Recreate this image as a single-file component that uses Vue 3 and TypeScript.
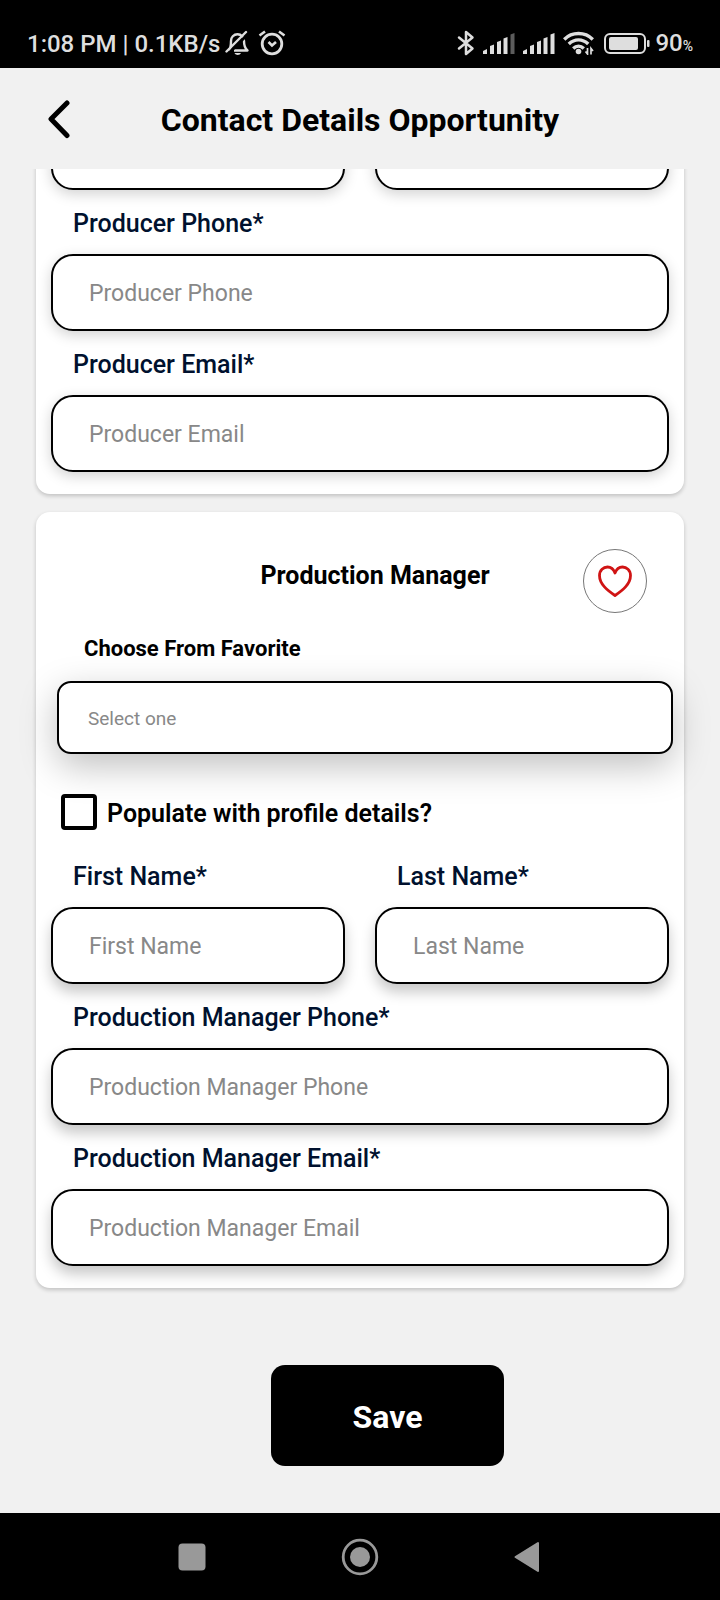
<script setup lang="ts">
import { reactive, ref } from 'vue'

interface Field {
  id: string
  label: string
  placeholder: string
  type: string
  half?: boolean
}

const producerFields: Field[] = [
  { id: 'producer-phone', label: 'Producer Phone*', placeholder: 'Producer Phone', type: 'tel' },
  { id: 'producer-email', label: 'Producer Email*', placeholder: 'Producer Email', type: 'email' },
]

const managerFields: Field[] = [
  { id: 'manager-first', label: 'First Name*', placeholder: 'First Name', type: 'text', half: true },
  { id: 'manager-last', label: 'Last Name*', placeholder: 'Last Name', type: 'text', half: true },
  { id: 'manager-phone', label: 'Production Manager Phone*', placeholder: 'Production Manager Phone', type: 'tel' },
  { id: 'manager-email', label: 'Production Manager Email*', placeholder: 'Production Manager Email', type: 'email' },
]

const values = reactive<Record<string, string>>({})
const favorite = ref('')
const populate = ref(false)
const signalBars = [4, 5]
</script>

<template>
  <div class="app">
    <div class="status">
      <div class="status-group">
        <span class="clock">1:08 PM | 0.1KB/s</span>
        <svg class="bell" width="25" height="26" viewBox="0 0 25 26" fill="none" stroke="#dedede" stroke-width="2.400">
          <path d="M3.500 20.500C6 18.500 6 16 6 11a6.500 6.500 0 0 1 6.500-6.800a6.500 6.500 0 0 1 6.500 6.800c0 5 .5 7 3.500 9.500H9" stroke-linejoin="round" />
          <path d="M3.500 23.500 23 4" stroke="#000" stroke-width="3" />
          <path d="M1.500 21.500 21 2" stroke-linecap="round" />
          <path d="M9.500 23h6.500c-1 2.500-5.500 2.500-6.500 0z" fill="#dedede" stroke="none" />
        </svg>
        <svg class="alarm" width="28" height="26" viewBox="0 0 28 26" fill="none" stroke="#dedede" stroke-width="2.800">
          <circle cx="14" cy="14" r="9.800" />
          <path d="M10.500 12 14 15.500l4-3.500M1.500 5.500 7 1.500M26.500 5.500 21 1.500" stroke-width="2.600" />
        </svg>
      </div>
      <div class="status-group">
        <svg width="18" height="26" viewBox="0 0 18 26" fill="none" stroke="#dedede" stroke-width="2.500">
          <path d="M2 7.500 15.500 18.500 9 24V2l6.500 5.500L2 18.500" stroke-linejoin="round" stroke-linecap="round" />
        </svg>
        <svg v-for="level in signalBars" :key="level" class="signal" width="32" height="21" viewBox="0 0 32 21" fill="#dedede">
          <path d="M0 21v-3l4-2v5z" />
          <path d="M7 21v-8l4-1.500V21z" />
          <path d="M14 21V9l4-1.500V21z" />
          <path d="M20.500 21V5.500l4-1.500v17z" />
          <path d="M27.500 21V1.500l4-1.500v21z" :fill="level === 5 ? '#dedede' : '#5c5c5c'" />
        </svg>
        <svg class="wifi" width="31" height="24" viewBox="0 0 31 24" fill="none" stroke="#dedede" stroke-width="3.400">
          <path d="M1.200 8.500C9 .5 22 .5 29.800 8.500M5.800 13C11.500 7.500 19.500 7.500 25.200 13M10.200 17.400c3.200-3 7.400-3 10.600 0" />
          <circle cx="15.500" cy="20.500" r="2.800" fill="#dedede" stroke="none" />
          <path d="M24.500 17v6l-2-2.500M28 23.500v-6l2 2.500" stroke-width="1.700" />
        </svg>
        <svg class="battery" width="46" height="21" viewBox="0 0 46 21" fill="none">
          <rect x="1" y="1" width="40" height="19" rx="5" stroke="#dedede" stroke-width="2" />
          <rect x="5" y="4" width="29" height="13" rx="2" fill="#dedede" />
          <rect x="43" y="7" width="2.500" height="7" rx="1" fill="#dedede" />
        </svg>
        <span class="percent">90<small>%</small></span>
      </div>
    </div>

    <header class="topbar">
      <button class="back" type="button" aria-label="Back">
        <svg width="24" height="40" viewBox="0 0 24 40" fill="none" stroke="#000" stroke-width="5" stroke-linecap="round" stroke-linejoin="round">
          <path d="M20 4 4 20l16 16.500" />
        </svg>
      </button>
      <h1>Contact Details Opportunity</h1>
    </header>

    <!-- Reversed column keeps the list resting on its last items -->
    <main class="scroller">
      <form class="form" @submit.prevent>
        <section class="card producer">
          <div class="fields">
            <input v-model="values['producer-first']" class="box half" type="text" aria-label="First Name" />
            <input v-model="values['producer-last']" class="box half" type="text" aria-label="Last Name" />
            <div v-for="f in producerFields" :key="f.id" class="field">
              <label :for="f.id">{{ f.label }}</label>
              <input :id="f.id" v-model="values[f.id]" class="box" :type="f.type" :placeholder="f.placeholder" />
            </div>
          </div>
        </section>

        <section class="card manager">
          <div class="card-head">
            <h2>Production Manager</h2>
            <button class="heart" type="button" aria-label="Add to favorites">
              <svg width="36" height="34" viewBox="0 0 36 34" fill="none" stroke="#d01414" stroke-width="2.800" stroke-linejoin="round">
                <path d="M18 31.500C10 26 2.500 20 2.500 11.500C2.500 6 6.500 3 10.500 3C14 3 16.500 5 18 9C19.500 5 22 3 25.500 3C29.500 3 33.500 6 33.500 11.500C33.500 20 26 26 18 31.500z" />
              </svg>
            </button>
          </div>
          <label class="choose" for="favorite">Choose From Favorite</label>
          <select id="favorite" v-model="favorite" class="select">
            <option value="">Select one</option>
          </select>
          <label class="populate">
            <input v-model="populate" type="checkbox" />
            <span>Populate with profile details?</span>
          </label>
          <div class="fields">
            <div v-for="f in managerFields" :key="f.id" class="field" :class="{ half: f.half }">
              <label :for="f.id">{{ f.label }}</label>
              <input :id="f.id" v-model="values[f.id]" class="box" :type="f.type" :placeholder="f.placeholder" />
            </div>
          </div>
        </section>

        <div class="actions">
          <button class="save" type="submit">Save</button>
        </div>
      </form>
    </main>

    <nav class="sysnav">
      <button type="button" aria-label="Recent apps">
        <svg width="38" height="38" viewBox="0 0 38 38"><rect x="5.500" y="5.500" width="27" height="27" rx="4" fill="#999" /></svg>
      </button>
      <button type="button" aria-label="Home">
        <svg width="38" height="38" viewBox="0 0 38 38">
          <circle cx="19" cy="19" r="16.800" fill="none" stroke="#999" stroke-width="2.800" />
          <circle cx="19" cy="19" r="10" fill="#999" />
        </svg>
      </button>
      <button type="button" aria-label="Back">
        <svg width="38" height="38" viewBox="0 0 38 38"><path d="M6.500 19 29 5v28z" fill="#999" stroke="#999" stroke-width="2" stroke-linejoin="round" /></svg>
      </button>
    </nav>
  </div>
</template>

<style>
body {
  margin: 0;
  background: #f1f1f1;
}
</style>

<style scoped>
.app {
  display: flex;
  flex-direction: column;
  height: 100vh;
  background: #f1f1f1;
  color: #000;
  font-family: Roboto, 'Liberation Sans', sans-serif;
}
.app *,
.app {
  box-sizing: border-box;
}
button,
input,
select {
  margin: 0;
  font-family: inherit;
}
button {
  padding: 0;
  border: 0;
  background: none;
  cursor: pointer;
}
svg {
  display: block;
}
.status {
  flex: none;
  display: flex;
  justify-content: space-between;
  align-items: center;
  height: 68px;
  padding: 18px 27px 0;
  background: #000;
  color: #dedede;
}
.status-group {
  display: flex;
  align-items: center;
}
.clock,
.percent {
  padding-top: 2px;
  font-size: 24px;
  line-height: 28px;
  font-weight: 500;
}
.bell {
  margin-left: 5px;
}
.alarm {
  margin-left: 8px;
}
.signal {
  margin-left: 8px;
}
.wifi {
  margin-left: 8px;
}
.battery {
  margin-left: 10px;
}
.percent {
  margin-left: 5px;
}
.percent small {
  font-size: 14px;
}
.topbar {
  flex: none;
  display: grid;
  grid-template-columns: 1fr auto 1fr;
  align-items: center;
  height: 101px;
  padding: 0 47px;
}
.back {
  justify-self: start;
}
h1 {
  margin: 0;
  padding-top: 2px;
  font-size: 32px;
  line-height: 40px;
  font-weight: 700;
}
.scroller {
  flex: 1;
  min-height: 0;
  display: flex;
  flex-direction: column-reverse;
  overflow-y: auto;
  scrollbar-width: none;
}
.form {
  flex: none;
  padding: 0 36px 47px;
}
.card {
  padding: 0 15px 22px;
  border-radius: 14px;
  background: #fff;
  box-shadow: 0 2px 4px rgba(0, 0, 0, 0.2);
}
.manager {
  margin-top: 18px;
  padding-top: 37px;
}
.fields {
  display: grid;
  grid-template-columns: 1fr 1fr;
  column-gap: 30px;
}
.field {
  grid-column: span 2;
  display: flex;
  flex-direction: column;
}
.half {
  grid-column: span 1;
}
.field label {
  margin: 19px 22px 15px;
  color: #00112e;
  font-size: 25px;
  line-height: 30px;
  font-weight: 500;
}
.box {
  width: 100%;
  height: 77px;
  padding: 2px 36px 0;
  border: 2px solid #000;
  border-radius: 22px;
  background: #fff;
  box-shadow: 0 4px 14px rgba(0, 0, 0, 0.18);
  font-size: 23px;
}
.manager .box {
  box-shadow: 0 8px 14px rgba(0, 0, 0, 0.22);
}
.box::placeholder {
  color: #888;
  opacity: 1;
}
.card-head {
  display: grid;
  grid-template-columns: 1fr auto 1fr;
  align-items: start;
  padding: 0 22px 0 52px;
}
h2 {
  grid-column: 2;
  margin: 12px 0 0;
  font-size: 25px;
  line-height: 30px;
  font-weight: 700;
}
.heart {
  justify-self: end;
  display: grid;
  place-items: center;
  width: 64px;
  height: 64px;
  border: 1px solid #777;
  border-radius: 50%;
}
.choose {
  display: block;
  margin: 22px 33px 18px;
  font-size: 22px;
  line-height: 28px;
  font-weight: 700;
}
.select {
  display: block;
  width: calc(100% - 2px);
  height: 73px;
  margin-left: 6px;
  padding: 2px 29px 0;
  appearance: none;
  border: 2px solid #000;
  border-radius: 14px;
  background: #fff;
  box-shadow: 0 12px 36px rgba(0, 0, 0, 0.25);
  color: #888;
  font-size: 19px;
}
.populate {
  display: flex;
  align-items: center;
  gap: 10px;
  margin: 40px 0 13px 10px;
  font-size: 25px;
  line-height: 30px;
  font-weight: 600;
}
.populate span {
  padding-top: 3px;
}
.populate input {
  flex: none;
  width: 36px;
  height: 36px;
  appearance: none;
  border: 4px solid #000;
  border-radius: 4px;
}
.populate input:checked {
  background: #000;
}
.actions {
  display: flex;
  justify-content: center;
  padding: 77px 0 0 55px;
}
.save {
  width: 233px;
  height: 101px;
  padding-top: 3px;
  border-radius: 14px;
  background: #000;
  color: #fff;
  font-size: 32px;
  line-height: 40px;
  font-weight: 700;
}
.sysnav {
  flex: none;
  display: grid;
  grid-template-columns: repeat(3, 1fr);
  place-items: center;
  height: 87px;
  padding: 0 15%;
  background: #000;
}
</style>
